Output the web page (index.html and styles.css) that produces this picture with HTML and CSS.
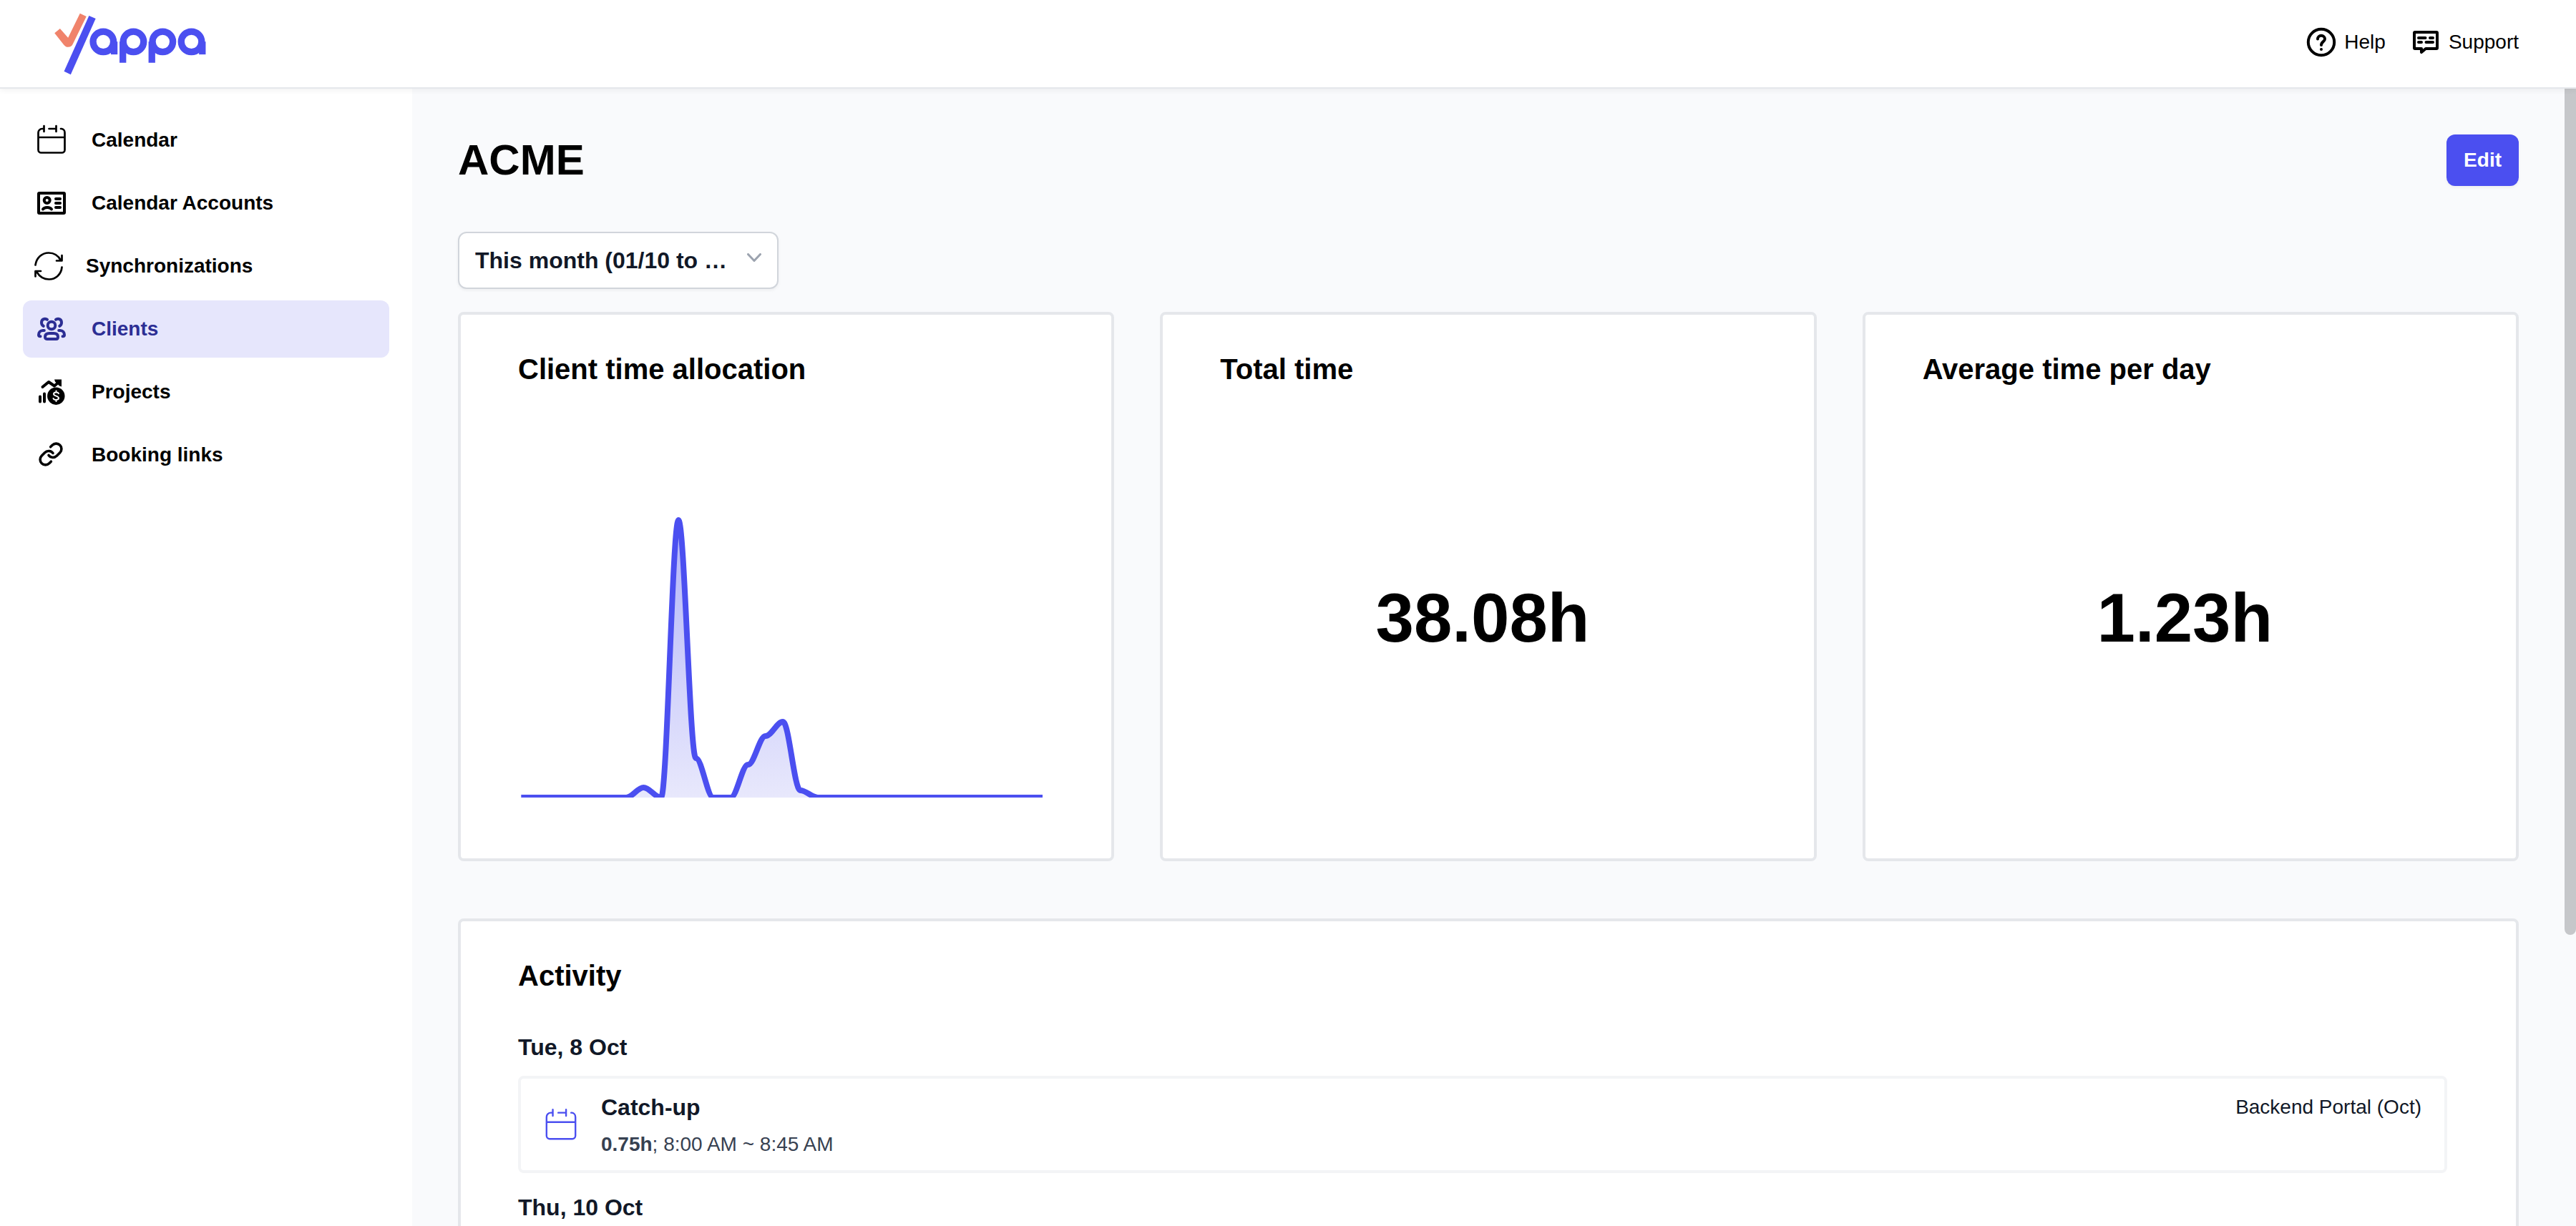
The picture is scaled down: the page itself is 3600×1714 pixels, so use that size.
FILE: index.html
```html
<!DOCTYPE html>
<html lang="en">
<head>
<meta charset="utf-8">
<title>Yappa - ACME</title>
<link rel="stylesheet" href="styles.css">
</head>
<body>
<svg class="sprite" aria-hidden="true">
  <symbol id="calendar" viewBox="0 0 48 48">
    <path d="M13.500 4v8M30.500 4v8M13.500 8H11a5.500 5.500 0 0 0-5.500 5.500V37.500A4 4 0 0 0 9.500 41.500h29a4 4 0 0 0 4-4V13.500A5.500 5.500 0 0 0 38 8h-1M20.500 8h10M5.500 20h37"/>
  </symbol>
</svg>
<header class="topbar">
  <a href="#" class="logo" aria-label="Yappa">
    <svg viewBox="48 24 640 268">
      <path class="logo-check" d="M48 112L71 93L105 132L155 29L182 42L125 158Q119 171 105 171Q94 171 86 160Z"/>
      <path class="logo-blue" d="M193 39L221 51L116 287L88 273Z"/>
      <g class="logo-rings">
        <circle cx="253" cy="148.500" r="43"/><line x1="299" y1="148" x2="299" y2="202"/>
        <circle cx="380" cy="148.500" r="43"/><line x1="335.500" y1="148" x2="335.500" y2="237"/>
        <circle cx="503" cy="148.500" r="43"/><line x1="457.500" y1="148" x2="457.500" y2="237"/>
        <circle cx="624" cy="148.500" r="43"/><line x1="670" y1="148" x2="670" y2="202"/>
      </g>
    </svg>
  </a>
  <nav class="top-links">
    <a href="#" class="top-link">
      <svg class="icon" viewBox="0 0 48 48"><circle cx="24" cy="24" r="18.200"/><path d="M19 19.500a5 4.700 0 0 1 10 0c0 3.800-5 3.500-5 8.500"/><circle class="solid" cx="24" cy="34" r="2"/></svg>
      Help
    </a>
    <a href="#" class="top-link">
      <svg class="icon" viewBox="0 0 48 48"><path d="M9 10h30a1 1 0 0 1 1 1v21a1 1 0 0 1-1 1H24l-6 5v-5H9a1 1 0 0 1-1-1V11a1 1 0 0 1 1-1zM14 18h9.500M30 18h4M14 24h4M24.500 24H34"/></svg>
      Support
    </a>
  </nav>
</header>
<div class="body">
  <nav class="sidebar">
    <a href="#" class="side-link"><svg class="icon thin"><use href="#calendar"/></svg>Calendar</a>
    <a href="#" class="side-link"><svg class="icon" viewBox="0 0 48 48"><rect x="6" y="10" width="36" height="28" rx="1"/><circle cx="17.700" cy="20" r="4"/><path d="M12 32.500c2-3.500 10-3.500 12 0M30 18h6M30 24h6M30 30h6"/></svg>Calendar Accounts</a>
    <a href="#" class="side-link"><svg class="icon small thin" viewBox="0 0 40 40"><path d="M1.500 18.500C3 8 11 1.500 20 1.500c7 0 13.500 4 17 10.500M38.500 5v7.500H31M38.500 21.500C37.500 32 29.500 38.500 20.500 38.500c-7 0-13-3.500-17-10M1.500 34.500V27H9"/></svg>Synchronizations</a>
    <a href="#" class="side-link active"><svg class="icon" viewBox="0 0 48 48"><circle cx="24" cy="19" r="5.300"/><path d="M15 35c0-3.500 2.500-5 6-5h6c3.500 0 6 1.500 6 5 0 2-.8 3-2.500 3h-13c-1.700 0-2.500-1-2.500-3zM18 10.800C14 8.500 10 10.500 10 15c0 2.300 1 4 2.800 4.800M30 10.800c4-2.300 8-.3 8 4.200 0 2.300-1 4-2.800 4.800M13.800 26H12c-3.800 0-6 3-6 6.300 0 1.200.7 1.900 2.500 1.900M34.200 26H36c3.800 0 6 3 6 6.300 0 1.200-.7 1.900-2.500 1.900"/></svg>Clients</a>
    <a href="#" class="side-link"><svg class="icon" viewBox="0 0 48 48"><path d="M8 30.500v7M14 26.500v11M11.500 17l8.500-7 8 5.500 7-6"/><path class="solid" d="M28 6.500h10v10l-3-1-6-6z"/><circle class="solid" cx="30.300" cy="29.700" r="12.200"/><path class="dollar" d="M34 26.200c-1-2.400-7-2.400-7 .6 0 3.600 7 2 7 5.800 0 3-6.500 3.200-7.500.4M30.500 22.500v2M30.500 35v2"/></svg>Projects</a>
    <a href="#" class="side-link"><svg class="icon" viewBox="0 0 48 48"><path transform="translate(5 5) scale(1.500)" stroke-width="2.400" d="M10 13a5 5 0 0 0 7.540.540l3-3a5 5 0 0 0-7.070-7.070l-1.720 1.710M14 11a5 5 0 0 0-7.540-.540l-3 3a5 5 0 0 0 7.070 7.070l1.710-1.710"/></svg>Booking links</a>
  </nav>
  <main class="main">
    <div class="heading">
      <h1>ACME</h1>
      <button type="button" class="edit">Edit</button>
    </div>
    <div class="period">
      <select aria-label="Period"><option>This month (01/10 to …</option></select>
      <svg class="chevron" viewBox="0 0 20 12"><path d="M1.500 1.500l8.500 9 8.500-9"/></svg>
    </div>
    <div class="cards">
      <section class="card">
        <h2>Client time allocation</h2>
        <div class="card-body">
          <svg class="chart" viewBox="723 544 733 640" role="img" aria-label="Client time allocation by day">
            <defs>
              <linearGradient id="fill" x1="0" y1="0" x2="0" y2="1"><stop offset="0" stop-color="#b2b4f9"/><stop offset="1" stop-color="#e8e8fc"/></linearGradient>
              <clipPath id="plot"><rect x="727" y="700" width="730" height="415"/></clipPath>
            </defs>
            <g clip-path="url(#plot)">
              <path fill="url(#fill)" d="M874 1115C882.500 1115 889.800 1101 898.300 1101S914.200 1115 922.700 1115C931.200 1115 938.500 727 947 727S962.800 1060 971.300 1060S987.200 1115 995.700 1115H1020C1028.500 1115 1035.800 1069 1044.300 1069S1060.200 1029 1068.700 1029S1084.500 1009 1093 1009S1108.800 1105 1117.300 1105S1133.200 1115 1141.700 1115Z"/>
              <path class="chart-line" d="M727 1115H874C882.500 1115 889.800 1101 898.300 1101S914.200 1115 922.700 1115C931.200 1115 938.500 727 947 727S962.800 1060 971.300 1060S987.200 1115 995.700 1115H1020C1028.500 1115 1035.800 1069 1044.300 1069S1060.200 1029 1068.700 1029S1084.500 1009 1093 1009S1108.800 1105 1117.300 1105S1133.200 1115 1141.700 1115H1458"/>
            </g>
          </svg>
        </div>
      </section>
      <section class="card">
        <h2>Total time</h2>
        <div class="card-body"><p class="figure">38.08h</p></div>
      </section>
      <section class="card">
        <h2>Average time per day</h2>
        <div class="card-body"><p class="figure">1.23h</p></div>
      </section>
    </div>
    <section class="card activity">
      <h2>Activity</h2>
      <h3>Tue, 8 Oct</h3>
      <article class="event">
        <svg class="icon event-icon" viewBox="2 1 44 44"><use href="#calendar" width="48" height="48"/></svg>
        <div class="event-text">
          <h4>Catch-up</h4>
          <p><strong>0.75h</strong>; 8:00 AM ~ 8:45 AM</p>
        </div>
        <p class="project">Backend Portal (Oct)</p>
      </article>
      <h3>Thu, 10 Oct</h3>
    </section>
    <div class="scroll-thumb"></div>
  </main>
</div>
</body>
</html>
```

FILE: styles.css
```css
* {
  box-sizing: border-box;
}

body {
  margin: 0;
  height: 100vh;
  display: flex;
  flex-direction: column;
  overflow: hidden;
  background: #fff;
  color: #000;
  font-family: "Liberation Sans", Arial, Helvetica, sans-serif;
  font-size: 28px;
  line-height: 40px;
}

h1, h2, h3, h4, p {
  margin: 0;
}

a {
  color: inherit;
  text-decoration: none;
}

.sprite {
  display: none;
}

.icon {
  flex: none;
  width: 48px;
  height: 48px;
  fill: none;
  stroke: currentColor;
  stroke-width: 4;
  stroke-linecap: round;
  stroke-linejoin: round;
}

.icon.small {
  width: 40px;
  height: 40px;
}

.icon.thin {
  stroke-width: 2.7;
}

.icon .solid {
  fill: currentColor;
  stroke: none;
}

.icon .dollar {
  stroke: #fff;
  stroke-width: 2;
}

/* Top bar */
.topbar {
  position: relative;
  z-index: 1;
  flex: none;
  height: 124px;
  padding: 0 80px 0 76px;
  display: flex;
  align-items: center;
  justify-content: space-between;
  background: #fff;
  border-bottom: 2px solid #e5e7eb;
  box-shadow: 0 2px 8px rgba(0, 0, 0, 0.06);
}

.logo svg {
  display: block;
  width: 213px;
  height: 89px;
}

.logo-check {
  fill: #f0836b;
}

.logo-blue {
  fill: #4b4ff0;
}

.logo-rings {
  fill: none;
  stroke: #4b4ff0;
  stroke-width: 28;
}

.top-links {
  display: flex;
  gap: 32px;
  padding-bottom: 4px;
}

.top-link {
  display: flex;
  align-items: center;
  gap: 8px;
}

/* Sidebar */
.body {
  flex: 1;
  min-height: 0;
  display: flex;
}

.sidebar {
  flex: none;
  width: 576px;
  padding: 32px;
  display: flex;
  flex-direction: column;
  gap: 8px;
}

.side-link {
  height: 80px;
  padding: 0 16px;
  display: flex;
  align-items: center;
  gap: 32px;
  border-radius: 12px;
  font-weight: 700;
}

.side-link.active {
  background: #e6e6fc;
  color: #2c2e94;
}

/* Main column */
.main {
  position: relative;
  flex: 1;
  min-width: 0;
  padding: 64px 80px 0 64px;
  overflow: hidden;
  background: #f9fafc;
}

.heading {
  display: flex;
  align-items: center;
  justify-content: space-between;
}

h1 {
  font-size: 60px;
  line-height: 72px;
}

.edit {
  height: 72px;
  padding: 0 24px;
  border: 0;
  border-radius: 12px;
  background: #4b4ff0;
  box-shadow: 0 2px 4px rgba(0, 0, 0, 0.05);
  color: #fff;
  font: inherit;
  font-weight: 700;
}

.period {
  position: relative;
  width: 448px;
  margin: 64px 0 32px;
}

.period select {
  display: block;
  width: 100%;
  height: 80px;
  padding: 0 64px 0 22px;
  appearance: none;
  border: 2px solid #d1d5db;
  border-radius: 12px;
  background: #fff;
  box-shadow: 0 2px 4px rgba(0, 0, 0, 0.05);
  color: #111827;
  font: inherit;
  font-size: 32px;
  font-weight: 700;
}

.chevron {
  position: absolute;
  top: 30px;
  right: 24px;
  width: 20px;
  height: 12px;
  fill: none;
  stroke: #9ca3af;
  stroke-width: 3;
  stroke-linecap: round;
  pointer-events: none;
}

.cards {
  display: grid;
  grid-template-columns: repeat(3, 1fr);
  gap: 64px;
}

.card {
  padding: 48px 96px 16px 80px;
  border: 4px solid #e5e7eb;
  border-radius: 8px;
  background: #fff;
}

h2 {
  font-size: 40px;
  line-height: 56px;
}

.card-body {
  height: 640px;
  display: flex;
  align-items: center;
  justify-content: center;
}

.chart {
  width: 100%;
  height: 100%;
}

.chart-line {
  fill: none;
  stroke: #4b4ff0;
  stroke-width: 8;
}

.figure {
  font-size: 96px;
  font-weight: 700;
  line-height: 96px;
}

/* Activity list */
.activity {
  margin-top: 80px;
}

.activity h2 {
  margin-bottom: 48px;
}

h3, h4 {
  color: #111827;
  font-size: 32px;
  line-height: 48px;
}

.event {
  margin: 16px 0 24px;
  padding: 16px 32px;
  display: flex;
  align-items: center;
  gap: 32px;
  border: 4px solid #f3f4f6;
  border-radius: 8px;
}

.event-icon {
  color: #4b4ff0;
  stroke-width: 2.2;
}

.event-text {
  flex: 1;
  display: flex;
  flex-direction: column;
  gap: 8px;
  color: #374151;
}

.project {
  align-self: flex-start;
  color: #111827;
  line-height: 48px;
}

.scroll-thumb {
  position: absolute;
  top: 0;
  right: 0;
  width: 16px;
  height: 74.4%;
  border-radius: 0 0 8px 8px;
  background: #c6c7ca;
}
```
